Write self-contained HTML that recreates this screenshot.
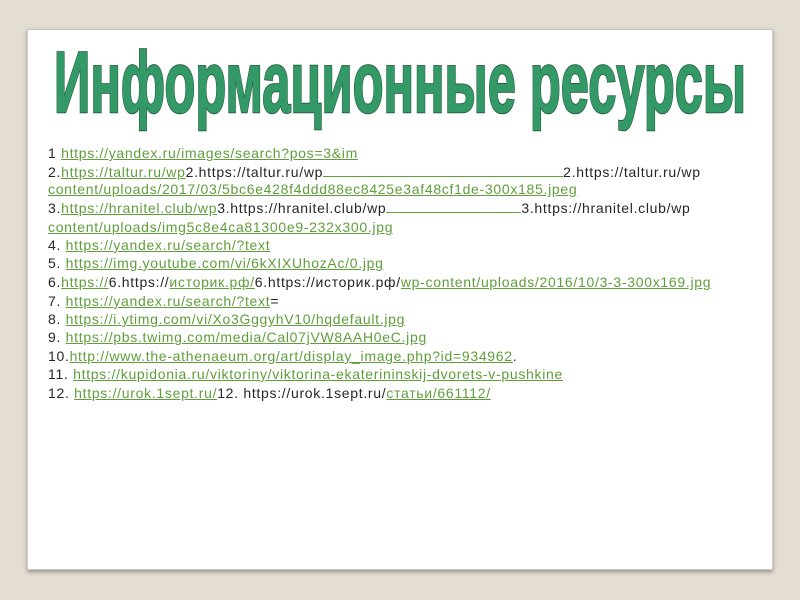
<!DOCTYPE html>
<html><head><meta charset="utf-8"><style>
html,body{margin:0;padding:0}
body{width:800px;height:600px;background:#e4ddd2;position:relative;overflow:hidden;font-family:"Liberation Sans",sans-serif}
.card{position:absolute;left:27px;top:29px;width:746px;height:541px;background:#fff;box-shadow:0 2px 4px rgba(0,0,0,.35);border:1px solid #c8c8c8;box-sizing:border-box}
.l{position:absolute;left:48px;font-size:14px;letter-spacing:0.7px;color:#262626;white-space:nowrap;line-height:16px}
a{color:#5f9e3a;text-decoration:underline}
.u{display:inline-block;border-bottom:1px solid #5f9e3a;height:12px;vertical-align:baseline}
</style></head><body>
<div class="card"></div>
<svg style="position:absolute;left:0;top:0" width="800" height="140">
<text x="400" y="112" text-anchor="middle" font-family="Liberation Sans Narrow, Liberation Sans, sans-serif" font-weight="bold" font-size="86" textLength="692" lengthAdjust="spacingAndGlyphs" fill="#339966" stroke="#1f4d33" stroke-width="2.5" paint-order="stroke">Информационные ресурсы</text>
<text x="400" y="112" text-anchor="middle" font-family="Liberation Sans Narrow, Liberation Sans, sans-serif" font-weight="bold" font-size="86" textLength="692" lengthAdjust="spacingAndGlyphs" fill="#339966" stroke="#339966" stroke-width="1">Информационные ресурсы</text>
</svg>
<div class="l" style="top:145px">1 <a>https://yandex.ru/images/search?pos=3&amp;im</a></div>
<div class="l" style="top:164px">2.<a>https://taltur.ru/wp</a>2.https://taltur.ru/wp<span class="u" style="width:240px"></span>2.https://taltur.ru/wp</div>
<div class="l" style="top:181px"><a>content/uploads/2017/03/5bc6e428f4ddd88ec8425e3af48cf1de-300x185.jpeg</a></div>
<div class="l" style="top:200px">3.<a>https://hranitel.club/wp</a>3.https://hranitel.club/wp<span class="u" style="width:135px"></span>3.https://hranitel.club/wp</div>
<div class="l" style="top:219px"><a>content/uploads/img5c8e4ca81300e9-232x300.jpg</a></div>
<div class="l" style="top:237px">4. <a>https://yandex.ru/search/?text</a></div>
<div class="l" style="top:255px">5. <a>https://img.youtube.com/vi/6kXIXUhozAc/0.jpg</a></div>
<div class="l" style="top:274px">6.<a>https://</a>6.https://<a>историк.рф/</a>6.https://историк.рф/<a>wp-content/uploads/2016/10/3-3-300x169.jpg</a></div>
<div class="l" style="top:293px">7. <a>https://yandex.ru/search/?text</a>=</div>
<div class="l" style="top:311px">8. <a>https://i.ytimg.com/vi/Xo3GggyhV10/hqdefault.jpg</a></div>
<div class="l" style="top:329px">9. <a>https://pbs.twimg.com/media/Cal07jVW8AAH0eC.jpg</a></div>
<div class="l" style="top:348px">10.<a>http://www.the-athenaeum.org/art/display_image.php?id=934962</a>.</div>
<div class="l" style="top:366px">11. <a>https://kupidonia.ru/viktoriny/viktorina-ekaterininskij-dvorets-v-pushkine</a></div>
<div class="l" style="top:385px">12. <a>https://urok.1sept.ru/</a>12. https://urok.1sept.ru/<a>статьи/661112/</a></div>
</body></html>
